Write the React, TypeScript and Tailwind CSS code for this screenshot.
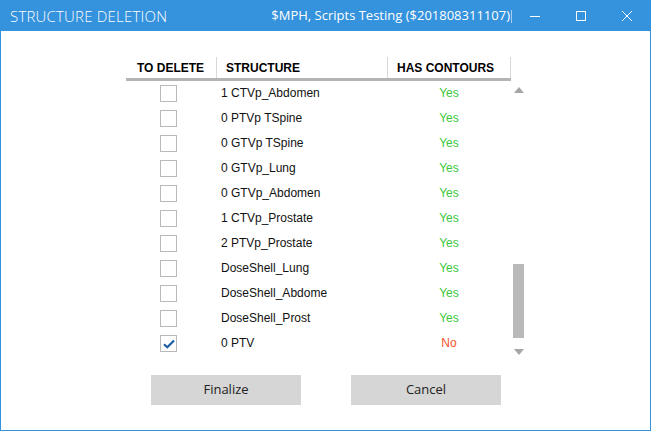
import React from "react";

const rows: { name: string; has: boolean; checked: boolean }[] = [
  { name: "1 CTVp_Abdomen", has: true, checked: false },
  { name: "0 PTVp TSpine", has: true, checked: false },
  { name: "0 GTVp TSpine", has: true, checked: false },
  { name: "0 GTVp_Lung", has: true, checked: false },
  { name: "0 GTVp_Abdomen", has: true, checked: false },
  { name: "1 CTVp_Prostate", has: true, checked: false },
  { name: "2 PTVp_Prostate", has: true, checked: false },
  { name: "DoseShell_Lung", has: true, checked: false },
  { name: "DoseShell_Abdome", has: true, checked: false },
  { name: "DoseShell_Prost", has: true, checked: false },
  { name: "0 PTV", has: false, checked: true },
];

export default function App() {
  return (
    <div className="w-[651px] h-[431px] border border-[#3592dc] bg-white flex flex-col overflow-hidden">
      {/* Title bar */}
      <div className="h-[30px] bg-[#3592dc] flex items-center text-white shrink-0">
        <div className="pl-[9px] text-[15px] font-light tracking-[0.2px] [font-family:'Open_Sans',sans-serif] flex-1 whitespace-nowrap">
          STRUCTURE DELETION
        </div>
        <div className="text-[13px] [font-family:'Open_Sans',sans-serif] whitespace-nowrap pr-[1px]">
          $MPH, Scripts Testing ($201808311107)
        </div>
        <div className="w-px h-[13px] bg-[#a9cdf0]" />
        <div className="w-[46px] h-full flex items-center justify-center">
          <svg width="10" height="10" viewBox="0 0 10 10">
            <line x1="0" y1="5.5" x2="10" y2="5.5" stroke="white" strokeWidth="1" />
          </svg>
        </div>
        <div className="w-[46px] h-full flex items-center justify-center">
          <svg width="10" height="10" viewBox="0 0 10 10">
            <rect x="0.5" y="0.5" width="9" height="9" fill="none" stroke="white" strokeWidth="1" />
          </svg>
        </div>
        <div className="w-[46px] h-full flex items-center justify-center">
          <svg width="10" height="10" viewBox="0 0 10 10">
            <line x1="0" y1="0" x2="10" y2="10" stroke="white" strokeWidth="1" />
            <line x1="10" y1="0" x2="0" y2="10" stroke="white" strokeWidth="1" />
          </svg>
        </div>
      </div>

      {/* Body */}
      <div className="flex-1 flex flex-col [font-family:'Liberation_Sans',Arial,sans-serif]">
        <div className="flex pt-[24px] pl-[125px]">
          <div className="w-[385px] flex flex-col">
            {/* Header */}
            <div className="flex h-[23px] text-[12px] font-bold text-black">
              <div className="w-[90px] pl-[11px] flex items-center pt-[2px]">TO DELETE</div>
              <div className="w-px h-[21px] mt-[2px] bg-[#d8d8d8]" />
              <div className="w-[170px] pl-[9px] flex items-center pt-[2px]">STRUCTURE</div>
              <div className="w-px h-[21px] mt-[2px] bg-[#d8d8d8]" />
              <div className="flex-1 pl-[9px] flex items-center pt-[2px]">HAS CONTOURS</div>
              <div className="w-px h-[21px] mt-[2px] bg-[#d8d8d8]" />
            </div>
            <div className="h-[3px] bg-[#b4b4b4]" />
            {/* Rows */}
            <div className="flex flex-col">
              {rows.map((r) => (
                <div key={r.name} className="flex h-[25px] items-center text-[12px] text-[#111]">
                  <div className="w-[90px] pl-[34px] flex items-center">
                    <div className="w-[17px] h-[17px] border border-[#b9b9b9] bg-white flex items-center justify-center">
                      {r.checked && (
                        <svg width="12" height="10" viewBox="0 0 12 10">
                          <path d="M1 5.2 L4.3 8.3 L11 1.5" fill="none" stroke="#1f5fa6" strokeWidth="2.2" />
                        </svg>
                      )}
                    </div>
                  </div>
                  <div className="w-[171px] pl-[5px] pb-[2px]">{r.name}</div>
                  <div className={`flex-1 text-center pb-[2px] ${r.has ? "text-[#3cc83c]" : "text-[#f2532b]"}`}>
                    {r.has ? "Yes" : "No"}
                  </div>
                </div>
              ))}
            </div>
          </div>
          {/* Scrollbar */}
          <div className="w-[15px] flex flex-col items-center pt-[27px]">
            <div className="h-[16px] flex items-center justify-center">
              <svg width="10" height="6" viewBox="0 0 10 6">
                <polygon points="5,0 10,6 0,6" fill="#a6a6a6" />
              </svg>
            </div>
            <div className="h-[166px]" />
            <div className="w-[11px] h-[74px] bg-[#b9b9b9]" />
            <div className="h-[8px]" />
            <div className="h-[12px] flex items-center justify-center">
              <svg width="10" height="6" viewBox="0 0 10 6">
                <polygon points="0,0 10,0 5,6" fill="#a6a6a6" />
              </svg>
            </div>
          </div>
        </div>

        {/* Buttons */}
        <div className="flex justify-center gap-[50px] pt-[17px] pl-[1px] [font-family:'Open_Sans',sans-serif]">
          <div className="w-[150px] h-[30px] bg-[#d6d6d6] flex items-center justify-center text-[13px] text-[#222]">
            Finalize
          </div>
          <div className="w-[150px] h-[30px] bg-[#d6d6d6] flex items-center justify-center text-[13px] text-[#222]">
            Cancel
          </div>
        </div>
      </div>
    </div>
  );
}
